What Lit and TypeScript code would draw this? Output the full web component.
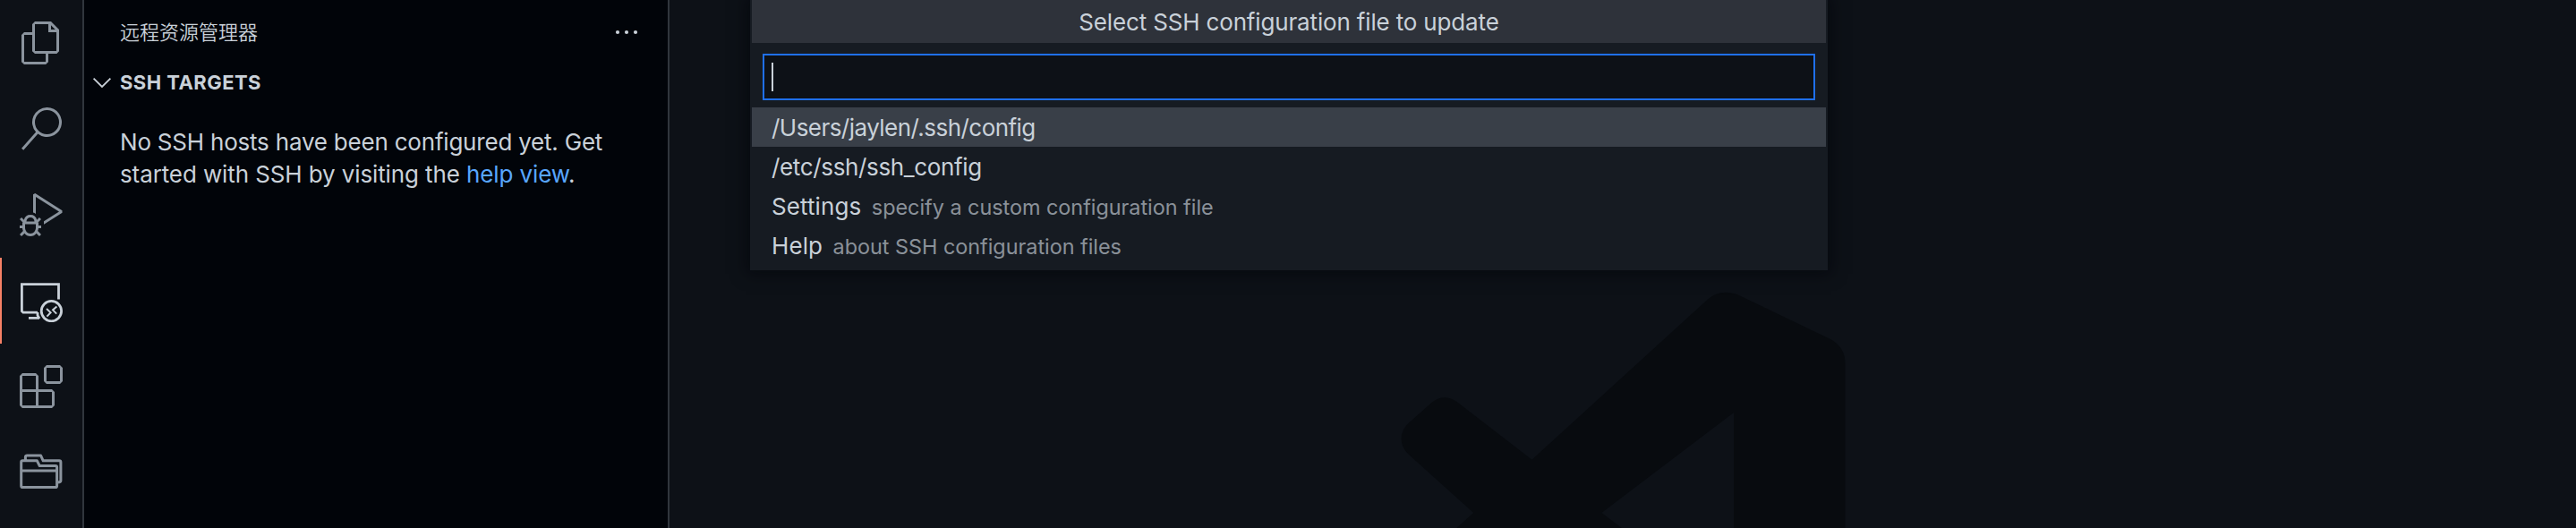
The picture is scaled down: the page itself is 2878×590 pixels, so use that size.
import { LitElement, html, css, svg } from "lit";
import { customElement } from "lit/decorators.js";
import { classMap } from "lit/directives/class-map.js";

const icons = {
  files: svg`<path fill="currentColor" transform="scale(2)" d="M17.5 0h-9L7 1.5V6H2.5L1 7.5v15.07L2.5 24h12.07L16 22.57V18h4.7l1.3-1.43V4.5L17.5 0zm0 2.12l2.38 2.38H17.5V2.12zm-3 20.38h-12v-15H7v9.07L8.5 18h6v4.5zm6-6h-12v-15H16V6h4.5v10.5z"/>`,
  search: svg`<path fill="currentColor" transform="scale(2)" d="M15.25 0a8.25 8.25 0 0 0-6.18 13.72L1 22.88l1.12 1 8.05-9.12A8.251 8.251 0 1 0 15.25.01V0zm0 15a6.75 6.75 0 1 1 0-13.5 6.75 6.75 0 0 1 0 13.5z"/>`,
  debug: svg`<path fill="currentColor" transform="scale(2)" d="M10.94 13.5l-1.32 1.32a3.73 3.73 0 0 0-7.24 0L1.06 13.5 0 14.56l1.72 1.72-.22.22V18H0v1.5h1.5v.08c.077.489.214.966.41 1.42L0 22.94 1.06 24l1.65-1.65A4.308 4.308 0 0 0 6 24a4.31 4.31 0 0 0 3.29-1.65L10.94 24 12 22.94 10.09 21c.198-.464.336-.951.41-1.45v-.1H12V18h-1.5v-1.5l-.22-.22L12 14.56l-1.06-1.06zM6 13.5a2.25 2.25 0 0 1 2.25 2.25h-4.5A2.25 2.25 0 0 1 6 13.5zm3 6a3.33 3.33 0 0 1-3 3 3.33 3.33 0 0 1-3-3v-2.25h6v2.25zm14.76-9.9v1.26L13.5 17.37V15.6l8.5-5.37L9 2v9.46a5.07 5.07 0 0 0-1.5-.72V.63L8.64 0l15.12 9.6z"/>`,
  remote: svg`<g fill="none" stroke="currentColor" stroke-width="2.8"><path d="M20 37.2H3.9L2.4 35.7V5.7H43.5V22.4M10 43.3H22M20 37V40.5L22 44"/><circle cx="35.4" cy="35.6" r="11.2"/><path stroke-width="2" d="M30 33L34.6 37.2L30.4 41.6M41.4 30.4L37 34.4L41.2 38.6"/></g>`,
  extensions: svg`<path fill="currentColor" transform="scale(2)" d="M13.5 1.5L15 0h7.5L24 1.5V9l-1.5 1.5H15L13.5 9V1.5zm1.5 0V9h7.5V1.5H15zM0 15V6l1.5-1.5H9L10.5 6v7.5H18l1.5 1.5v7.5L18 24H1.5L0 22.5V15zm9-1.5V6H1.5v7.5H9zM9 15H1.5v7.5H9V15zm1.5 7.5H18V15h-7.5v7.5z"/>`,
  folders: svg`<g fill="none" stroke="currentColor" stroke-width="3" stroke-linejoin="round"><path d="M1.7 12.4Q1.7 10.8 3.3 10.8H19.4L22.2 16.5H40Q41.6 16.5 41.6 18.1V38.9Q41.6 40.5 40 40.5H3.3Q1.7 40.5 1.7 38.9ZM1.7 22H41.6M6.4 10.8V6.8Q6.4 5 8.2 5H23.6L26.2 10.8H44.2Q45.9 10.8 45.9 12.5V33Q45.9 34.8 42.6 35"/></g>`,
};

@customElement("activity-bar")
class ActivityBar extends LitElement {
  static styles = css`
    :host { display: block; box-sizing: border-box; width: 94px; flex: none; background: #0d1117; border-right: 2px solid #30363d; }
    .item { box-sizing: border-box; height: 96px; padding: 24px 0 0 20px; border-left: 2px solid transparent; color: #8b949e; }
    .item.active { color: #c9d1d9; border-color: #f78166; }
    .icon { display: block; width: 48px; height: 48px; }
  `;
  render() {
    return (Object.keys(icons) as (keyof typeof icons)[]).map(
      (name) => html`<div class=${classMap({ item: true, active: name === "remote" })}>
        <svg class="icon" viewBox="0 0 48 48">${icons[name]}</svg>
      </div>`
    );
  }
}

@customElement("remote-explorer")
class RemoteExplorer extends LitElement {
  static styles = css`
    :host { display: block; box-sizing: border-box; width: 654px; flex: none; background: #010409; border-right: 2px solid #30363d; color: #c9d1d9; }
    .title { display: flex; align-items: center; justify-content: space-between; height: 72px; padding: 0 33px 0 40px; font: 350 22px/72px "Inter", "Noto Sans CJK SC", sans-serif; }
    .more { width: 26px; height: 6px; }
    .section { display: flex; align-items: center; height: 40px; padding-left: 8px; font-size: 22px; font-weight: 700; letter-spacing: 0.45px; }
    .chevron { width: 24px; height: 24px; margin-right: 8px; }
    .message { padding: 29px 40px 0; font-size: 26px; line-height: 36px; letter-spacing: -0.21px; white-space: nowrap; }
    .second { letter-spacing: -0.11px; }
    .link { color: #58a6ff; }
  `;
  render() {
    return html`
      <div class="title">
        <span>远程资源管理器</span>
        <svg class="more" viewBox="0 0 26 6" fill="currentColor"><circle cx="3" cy="3" r="2.1"/><circle cx="13" cy="3" r="2.1"/><circle cx="23" cy="3" r="2.1"/></svg>
      </div>
      <div class="section">
        <svg class="chevron" viewBox="0 0 24 24" fill="none" stroke="currentColor" stroke-width="1.8"><path d="M2.6 7.6L12 17L21.4 7.6"/></svg>
        <span>SSH TARGETS</span>
      </div>
      <div class="message">No SSH hosts have been configured yet. Get<br><span class="second">started with SSH by visiting the <span class="link">help view</span>.</span></div>
    `;
  }
}

@customElement("quick-input")
class QuickInput extends LitElement {
  static styles = css`
    :host { display: block; box-sizing: border-box; padding: 0 2px 6px; background: #161b22; color: #c9d1d9; box-shadow: 0 0 16px 4px rgba(1, 4, 9, 0.55); font-size: 26px; letter-spacing: 0.1px; }
    .title { height: 48px; background: #2e323a; text-align: center; line-height: 50px; letter-spacing: -0.16px; }
    .field { box-sizing: border-box; height: 52px; margin: 12px 12px 8px; padding: 8px; border: 2px solid #1f6feb; background: #0d1117; }
    .caret { width: 2px; height: 32px; background: #c9d1d9; }
    .row { display: flex; align-items: baseline; height: 44px; padding-left: 22px; line-height: 46px; white-space: nowrap; }
    .row.focused { background: #393f48; }
    .path { letter-spacing: -0.35px; }
    .focused .path { letter-spacing: -0.54px; }
    .description { margin-left: 11.5px; font-size: 23.4px; letter-spacing: -0.02px; opacity: 0.65; }
  `;
  rows = [
    ["/Users/jaylen/.ssh/config", ""],
    ["/etc/ssh/ssh_config", ""],
    ["Settings", "specify a custom configuration file"],
    ["Help", "about SSH configuration files"],
  ];
  render() {
    return html`
      <div class="title">Select SSH configuration file to update</div>
      <div class="field"><div class="caret"></div></div>
      ${this.rows.map(([label, description], i) => html`
        <div class=${classMap({ row: true, focused: i === 0 })}>
          <span class=${classMap({ path: label.startsWith("/") })}>${label}</span>${description ? html`<span class="description">${description}</span>` : ""}
        </div>`)}
    `;
  }
}

@customElement("app-root")
class AppRoot extends LitElement {
  static styles = css`
    :host { display: flex; position: relative; width: 2878px; height: 590px; overflow: hidden; background: #0d1117; font-family: "Inter", "Noto Sans CJK SC", sans-serif; }
    .editor { flex: 1; display: flex; justify-content: center; align-items: flex-end; overflow: hidden; }
    .watermark { width: 500px; height: 264px; }
    .picker { position: absolute; top: 0; left: 838px; width: 1204px; }
  `;
  render() {
    return html`
      <activity-bar></activity-bar>
      <remote-explorer></remote-explorer>
      <main class="editor">
        <svg class="watermark" viewBox="1563 326 500 264">
          <path fill="#080b0f" fill-rule="evenodd" d="M1646.3 573L1573.5 507.5Q1565.6 500 1565.6 490Q1565.6 481 1573 473.5L1600 449.5Q1613 439.5 1627 448.5L1711.5 513.7L1908 334.5Q1923 321.5 1944 330.5L2045 379Q2061.5 388 2061.5 406V740Q2061.5 758 2045 767L1944 815.5Q1923 824.5 1908 811.5L1711.5 632.3L1627 697.5Q1613 706.5 1600 696.5L1573 672.5Q1565.6 665 1565.6 656Q1565.6 646 1573.5 638.5ZM1789.4 573L1937 685V461Z"/>
        </svg>
      </main>
      <quick-input class="picker"></quick-input>
    `;
  }
}
